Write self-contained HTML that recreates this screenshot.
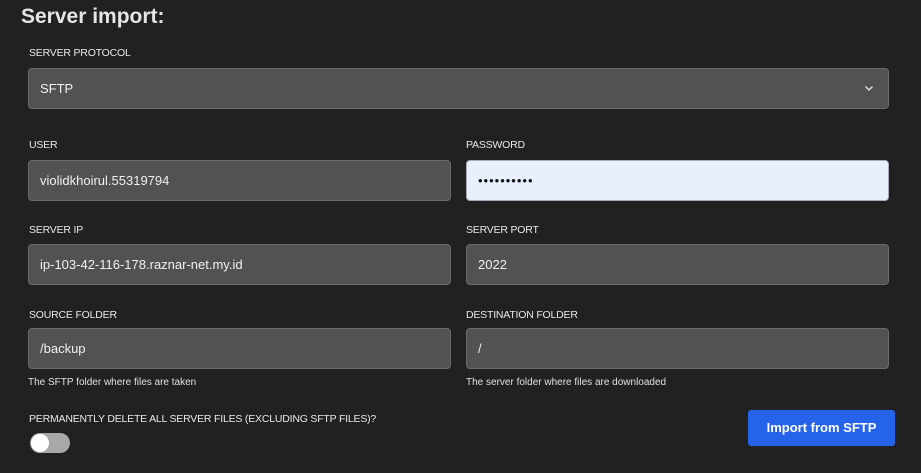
<!DOCTYPE html>
<html><head><style>
*{box-sizing:border-box;margin:0;padding:0}
body{width:921px;height:473px;background:#212121;font-family:"Liberation Sans",sans-serif;color:#eee;position:relative;overflow:hidden}
.a{position:absolute}
h1{position:absolute;left:21px;top:5px;font-size:21px;font-weight:bold;color:#e6e6e6}
.l{position:absolute;font-size:10.5px;color:#e8e8e8;letter-spacing:-0.2px}
.i{position:absolute;height:41px;background:#525252;border:1px solid #6a6a6a;border-radius:4px;font-size:13px;color:#f0f0f0;padding:0 11px;line-height:39px}
.h{position:absolute;font-size:10px;color:#e0e0e0}
</style></head><body>
<h1>Server import:</h1>
<div class="l" style="left:29px;top:47px">SERVER PROTOCOL</div>
<div class="i" style="left:28px;top:68px;width:861px">SFTP
<svg class="a" style="right:14px;top:16px" width="10" height="7" viewBox="0 0 10 7"><path d="M1.5 1.5L5 5l3.5-3.5" stroke="#ddd" stroke-width="1.5" fill="none"/></svg></div>
<div class="l" style="left:29px;top:139px">USER</div>
<div class="i" style="left:28px;top:160px;width:423px">violidkhoirul.55319794</div>
<div class="l" style="left:466px;top:139px">PASSWORD</div>
<div class="i" style="left:466px;top:160px;width:423px;background:#e8f0fe;border-color:#aab;color:#111;letter-spacing:1px">••••••••••</div>
<div class="l" style="left:29px;top:224px">SERVER IP</div>
<div class="i" style="left:28px;top:244px;width:423px">ip-103-42-116-178.raznar-net.my.id</div>
<div class="l" style="left:466px;top:224px">SERVER PORT</div>
<div class="i" style="left:466px;top:244px;width:423px">2022</div>
<div class="l" style="left:29px;top:309px">SOURCE FOLDER</div>
<div class="i" style="left:28px;top:328px;width:423px">/backup</div>
<div class="l" style="left:466px;top:309px">DESTINATION FOLDER</div>
<div class="i" style="left:466px;top:328px;width:423px">/</div>
<div class="h" style="left:28px;top:377px">The SFTP folder where files are taken</div>
<div class="h" style="left:466px;top:377px">The server folder where files are downloaded</div>
<div class="l" style="left:29px;top:413px">PERMANENTLY DELETE ALL SERVER FILES (EXCLUDING SFTP FILES)?</div>
<div class="a" style="left:30px;top:433px;width:40px;height:20px;border-radius:10px;background:#a8a8a8"></div>
<div class="a" style="left:31px;top:434px;width:18px;height:18px;border-radius:50%;background:#fff"></div>
<div class="a" style="left:748px;top:410px;width:147px;height:36px;background:#2563eb;border-radius:3px;color:#fff;font-weight:bold;font-size:13px;text-align:center;line-height:36px">Import from SFTP</div>
</body></html>
